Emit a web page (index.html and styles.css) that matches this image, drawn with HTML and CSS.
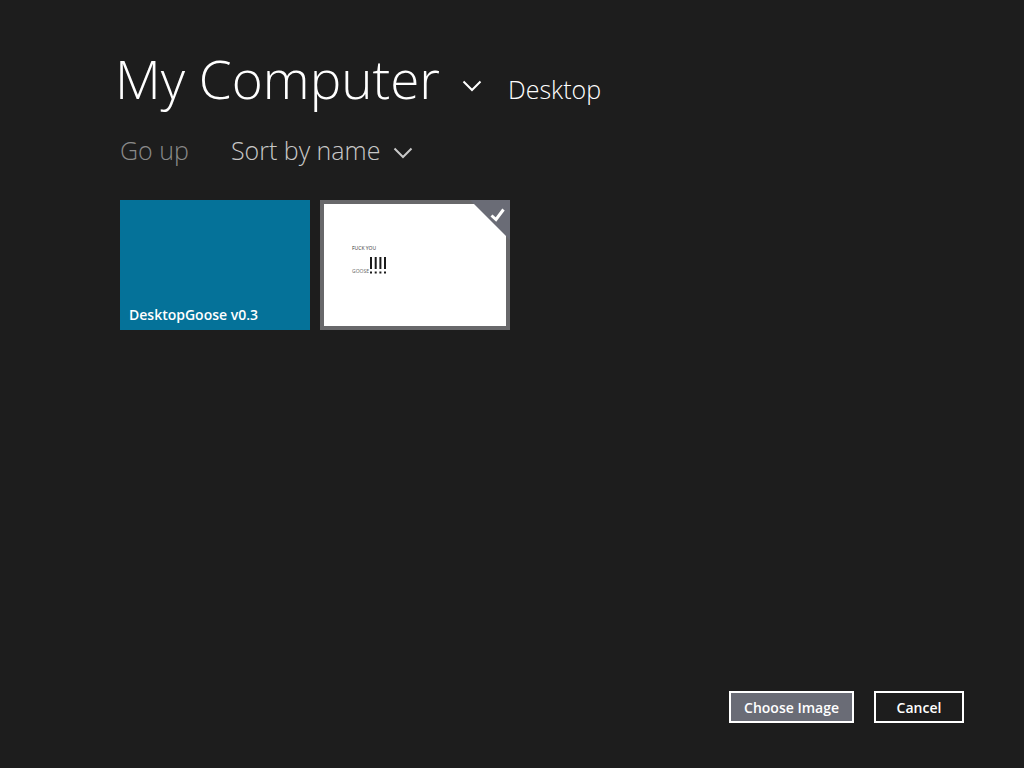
FILE: index.html
```
<!DOCTYPE html>
<html lang="en">
<head>
    <meta charset="UTF-8">
    <meta name="viewport" content="width=device-width, initial-scale=1.0">
    <title>Choose Image</title>
    <link rel="stylesheet" href="styles.css">
</head>
<body>
    <header class="header">
        <h1 class="location">
            <select class="picker" aria-label="Location">
                <option>My Computer</option>
            </select>
            <svg class="chevron" viewBox="0 0 20 12" aria-hidden="true"><path d="M1.5 1.500 10 10l8.500-8.500"/></svg>
        </h1>
        <h2 class="folder-name">Desktop</h2>
    </header>

    <nav class="toolbar">
        <button type="button" class="go-up">Go up</button>
        <div class="sort">
            <select class="picker" aria-label="Sort order">
                <option>Sort by name</option>
            </select>
            <svg class="chevron" viewBox="0 0 20 12" aria-hidden="true"><path d="M1.500 1.500 10 10l8.500-8.500"/></svg>
        </div>
    </nav>

    <main class="files">
        <button type="button" class="tile folder">DesktopGoose v0.3</button>

        <label class="tile image">
            <svg class="thumb" viewBox="0 0 182 122" role="img" aria-label="Note picture">
                <text x="28" y="46" class="note">FUCK YOU</text>
                <text x="28" y="69" class="note faint">GOOSE</text>
                <path class="marks" d="M47 53v12M51.700 53v12M56.400 53v12M61 53v12"/>
                <path class="marks" d="M47 67.500v2M51.700 67.500v2M56.400 67.500v2M61 67.500v2"/>
            </svg>
            <input type="checkbox" class="check" aria-label="Select image" checked>
            <svg class="tick" viewBox="0 0 16 14" aria-hidden="true"><path d="M1.500 7.500 6 11.500 13.500 1.500"/></svg>
        </label>
    </main>

    <footer class="actions">
        <button type="button" class="btn primary">Choose Image</button>
        <button type="button" class="btn">Cancel</button>
    </footer>
</body>
</html>
```
FILE: styles.css
```
* {
    box-sizing: border-box;
}

body {
    display: flex;
    flex-direction: column;
    min-height: 100vh;
    margin: 0;
    padding: 43px 60px 45px 120px;
    background-color: #1d1d1d;
    color: #fff;
    font-family: "Segoe UI", "Open Sans", sans-serif;
}

select,
button {
    margin: 0;
    padding: 0;
    border: none;
    background: none;
    color: inherit;
    font: inherit;
    cursor: pointer;
}

.picker {
    appearance: none;
}

.chevron {
    width: 20px;
    height: 12px;
    margin-top: 6px;
    fill: none;
    stroke: currentColor;
    stroke-width: 2;
}

/* Header */
.header {
    display: flex;
    align-items: baseline;
    gap: 26px;
}

.location {
    display: flex;
    align-items: center;
    gap: 22px;
    margin: 0 0 0 -5px;
    font-size: 53px;
    font-weight: 300;
    line-height: 72px;
}

.location .chevron {
    margin-top: 14px;
}

.folder-name {
    margin: 0;
    font-size: 25px;
    font-weight: 300;
    line-height: 36px;
}

/* Go up / sort */
.toolbar {
    display: flex;
    align-items: center;
    gap: 42px;
    margin-top: 17px;
    color: #c8c8c8;
    font-size: 25px;
    font-weight: 300;
    line-height: 36px;
}

.go-up {
    color: #8a8a8a;
}

.sort {
    display: flex;
    align-items: center;
    gap: 12px;
}

/* Tiles */
.files {
    display: flex;
    flex-wrap: wrap;
    align-content: flex-start;
    flex-grow: 1;
    gap: 10px;
    margin-top: 32px;
}

.tile {
    width: 190px;
    height: 130px;
}

.folder {
    display: flex;
    align-items: flex-end;
    padding: 0 9px 5px;
    background-color: #057299;
    font-size: 14px;
    font-weight: 600;
    line-height: 20px;
}

.image {
    position: relative;
    border: 4px solid #68686b;
    background-color: #fff;
    cursor: pointer;
}

.thumb {
    display: block;
    width: 100%;
    height: 100%;
}

.note {
    fill: #333;
    font-size: 5px;
}

.faint {
    fill: #666;
}

.marks {
    stroke: #1a1a1a;
    stroke-width: 2;
}

/* Corner check mark */
.check {
    position: absolute;
    top: -4px;
    right: -4px;
    width: 40px;
    height: 40px;
    margin: 0;
    appearance: none;
    background-color: #6a6c76;
    clip-path: polygon(0 0, 100% 0, 100% 100%);
}

.tick {
    position: absolute;
    top: 4px;
    right: 0;
    width: 16px;
    height: 14px;
    fill: none;
    stroke: #fff;
    stroke-width: 3;
    pointer-events: none;
}

.check:not(:checked),
.check:not(:checked) + .tick {
    opacity: 0;
}

/* Bottom buttons */
.actions {
    display: flex;
    justify-content: flex-end;
    gap: 20px;
}

.btn {
    min-width: 90px;
    height: 32px;
    padding: 2px 13px 0;
    border: 2px solid #fff;
    font-size: 14px;
    font-weight: 600;
    line-height: 20px;
}

.primary {
    background-color: #6a6c76;
}
```
